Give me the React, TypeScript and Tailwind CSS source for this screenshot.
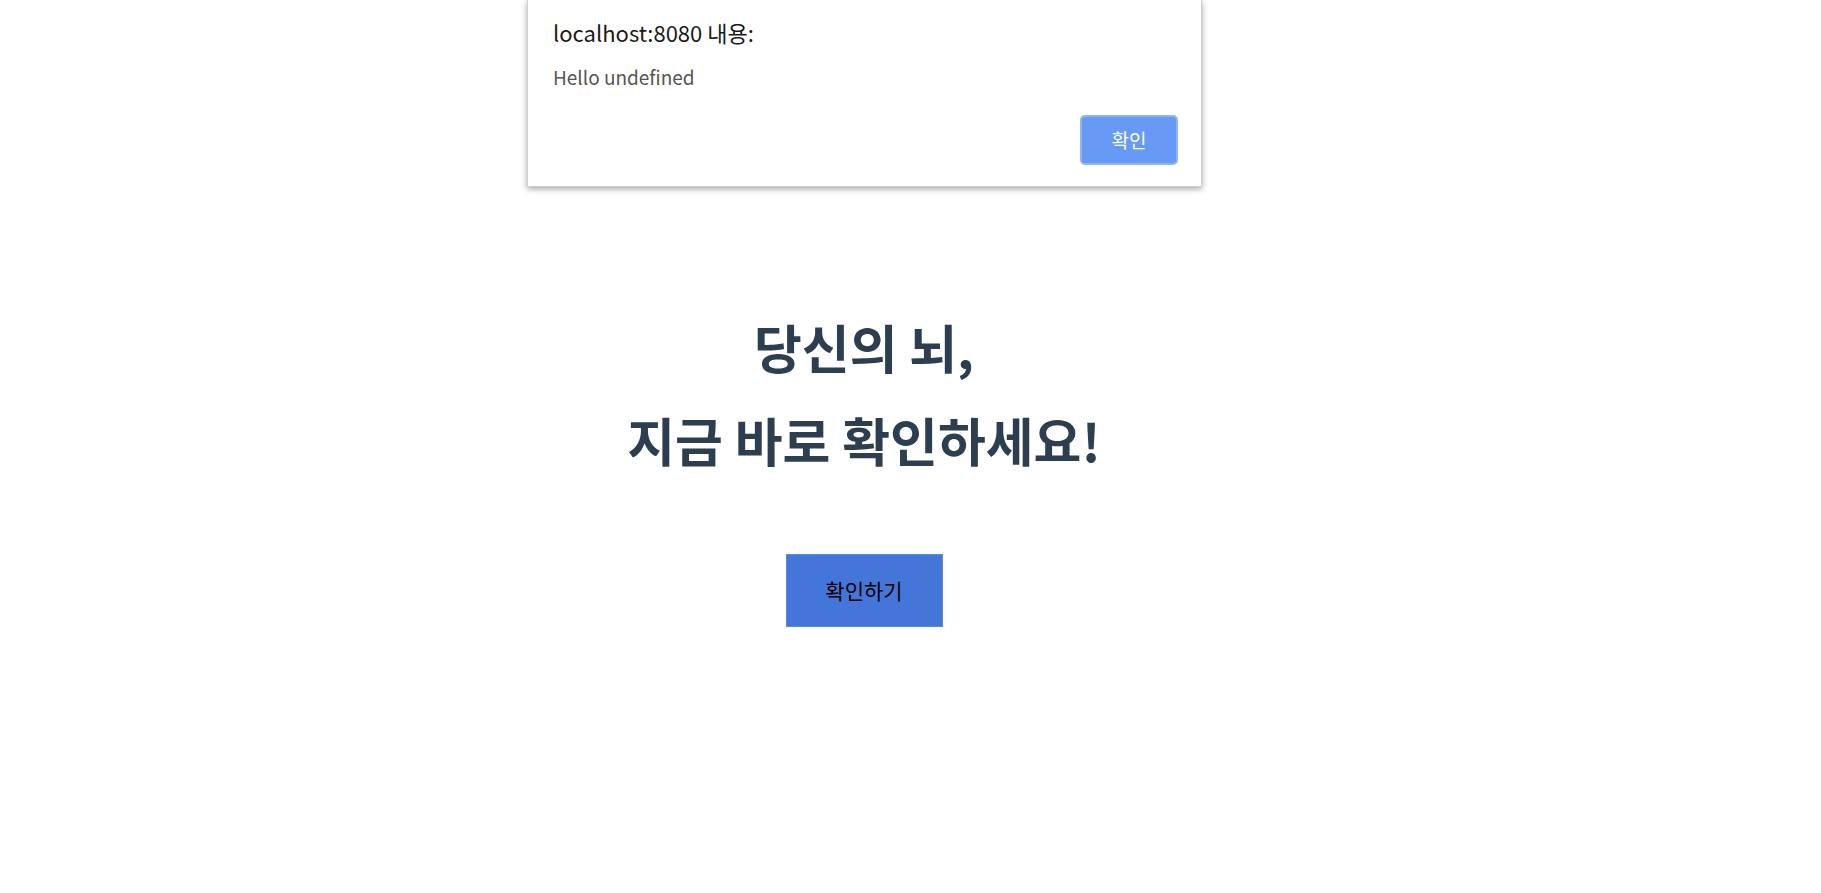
export default function App() {
  return (
    <div
      className="relative min-h-screen w-full bg-white"
      style={{ fontFamily: '"Noto Sans CJK KR", "Noto Sans", sans-serif' }}
    >
      {/* page */}
      <div className="flex w-[1728px] flex-col items-center pt-[300px]">
        <h1 className="text-center text-[52px] font-bold leading-[93px] text-[#2c3e50]">
          <div>당신의 뇌,</div>
          <div>지금 바로 확인하세요!</div>
        </h1>
        <button className="mt-[68px] h-[73px] w-[157px] border border-[#5a8ae8] bg-[#4475d9] text-[21px] text-black">
          확인하기
        </button>
      </div>

      {/* alert dialog */}
      <div className="absolute left-[527px] top-0 h-[187px] w-[675px] border-x border-b border-[#d0d0d0] bg-white shadow-[0_2px_6px_rgba(0,0,0,0.35)]">
        <div className="flex h-full flex-col pl-[25px] pr-[23px]">
          <div className="pt-[17px] text-[22px] leading-[30px] text-[#1a1a1a]">localhost:8080 내용:</div>
          <div className="mt-[17px] text-[19px] leading-[26px] text-[#555]">Hello undefined</div>
          <div className="mt-[25px] flex justify-end">
            <button className="h-[50px] w-[98px] rounded-[5px] border-2 border-[#8fb4f7] bg-[#669af4] text-[19px] text-white">
              확인
            </button>
          </div>
        </div>
      </div>
    </div>
  );
}
